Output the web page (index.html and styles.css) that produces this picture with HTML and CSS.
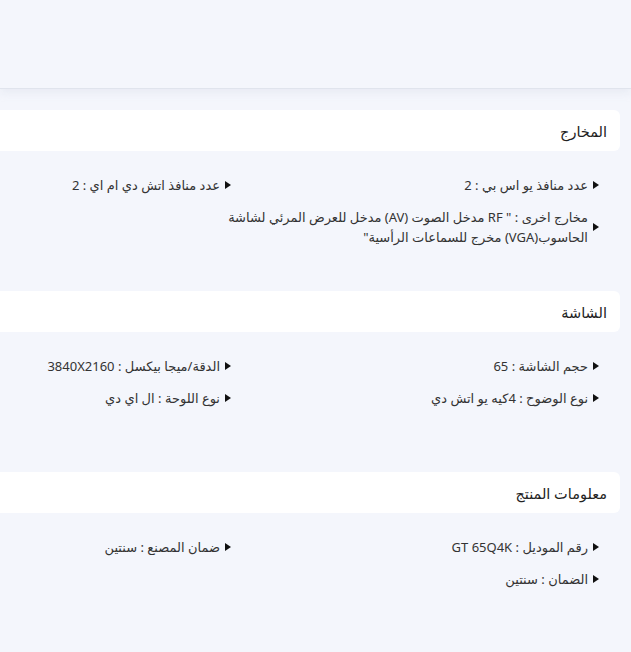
FILE: index.html
```html
<!DOCTYPE html>
<html lang="ar" dir="rtl">
<head>
<meta charset="utf-8">
<link rel="stylesheet" href="styles.css">
</head>
<body>
<div class="topbar"></div>
<main class="specs">
  <section class="spec">
    <h2 class="spec-title">المخارج</h2>
    <ul class="spec-list">
      <li class="spec-item"><span class="arrow"></span><span class="txt">عدد منافذ يو اس بي : 2</span></li>
      <li class="spec-item"><span class="arrow"></span><span class="txt">عدد منافذ اتش دي ام اي : 2</span></li>
      <li class="spec-item"><span class="arrow"></span><span class="txt">مخارج اخرى : " RF مدخل الصوت (AV) مدخل للعرض المرئي لشاشة الحاسوب(VGA) مخرج للسماعات الرأسية"</span></li>
    </ul>
  </section>
  <section class="spec">
    <h2 class="spec-title">الشاشة</h2>
    <ul class="spec-list">
      <li class="spec-item"><span class="arrow"></span><span class="txt">حجم الشاشة : 65</span></li>
      <li class="spec-item"><span class="arrow"></span><span class="txt">الدقة/ميجا بيكسل : 3840X2160</span></li>
      <li class="spec-item"><span class="arrow"></span><span class="txt">نوع الوضوح : 4كيه يو اتش دي</span></li>
      <li class="spec-item"><span class="arrow"></span><span class="txt">نوع اللوحة : ال اي دي</span></li>
    </ul>
  </section>
  <section class="spec">
    <h2 class="spec-title">معلومات المنتج</h2>
    <ul class="spec-list">
      <li class="spec-item"><span class="arrow"></span><span class="txt">رقم الموديل : GT 65Q4K</span></li>
      <li class="spec-item"><span class="arrow"></span><span class="txt">ضمان المصنع : سنتين</span></li>
      <li class="spec-item"><span class="arrow"></span><span class="txt">الضمان : سنتين</span></li>
    </ul>
  </section>
</main>
</body>
</html>
```
FILE: styles.css
```css
html, body {
  margin: 0;
  padding: 0;
}
body {
  background: #f4f6fc;
  font-family: "Noto Sans", "DejaVu Sans", sans-serif;
  color: #333;
  width: 631px;
  overflow: hidden;
}
.topbar {
  height: 88px;
  border-bottom: 1px solid #e0e4ed;
  box-shadow: 0 4px 8px rgba(200, 208, 225, 0.25);
}
.specs {
  padding-top: 21px;
}
.spec-title {
  margin: 0 11px 0 0;
  height: 41px;
  background: #fff;
  border-radius: 0 6px 6px 0;
  font-size: 14.5px;
  font-weight: normal;
  color: #222;
  display: flex;
  align-items: center;
  padding-right: 13px;
}
.spec-list {
  list-style: none;
  margin: 0;
  padding: 24px 32px 0 0;
  min-height: 116px;
  display: grid;
  grid-template-columns: 368px 1fr;
  row-gap: 12px;
  align-content: start;
  align-items: start;
}
.spec-item {
  display: flex;
  align-items: center;
  gap: 5px;
  font-size: 13px;
  line-height: 20px;
}
.arrow {
  flex: none;
  width: 0;
  height: 0;
  border-top: 4px solid transparent;
  border-bottom: 4px solid transparent;
  border-left: 6px solid #111;
}
.txt {
  flex: none;
  max-width: 368px;
}
```
